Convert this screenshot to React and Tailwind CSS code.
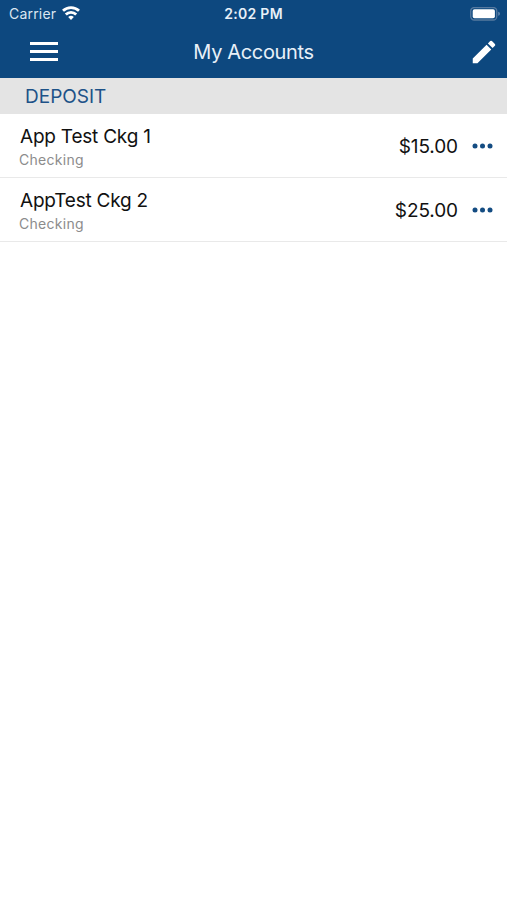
import React from "react";

const accounts = [
  { id: 1, name: "App Test Ckg 1", type: "Checking", balance: "$15.00" },
  { id: 2, name: "AppTest Ckg 2", type: "Checking", balance: "$25.00" },
];

const StatusBar = () => {
  return (
    <div className="grid h-[27px] grid-cols-3 items-center px-[9px] text-[14px] leading-none">
      <div className="flex items-center gap-[6px]">
        <span className="pt-px tracking-[0.2px] text-[#dbe6f1]">Carrier</span>
        <svg className="-mt-px" width="18" height="14" viewBox="0 0 18 14" fill="none" stroke="white" strokeWidth="2.8">
          <path d="M1 4.8a11.5 11.5 0 0 1 16 0" />
          <path d="M3.800 8.600a7.400 7.400 0 0 1 10.400 0" />
          <path d="M9 13.900L6.200 11.100a4 4 0 0 1 5.600 0z" fill="white" stroke="none" />
        </svg>
      </div>
      <span className="pt-px text-center font-semibold tracking-[0.3px] text-[#e8f0f8]">2:02 PM</span>
      <svg className="-mr-[2px] justify-self-end" width="30" height="14" viewBox="0 0 30 14">
        <rect x="0.75" y="0.5" width="26" height="12.5" rx="3.5" fill="none" stroke="#56799f" strokeWidth="1.3" />
        <rect x="2.7" y="2.2" width="22.2" height="9" rx="1.8" fill="white" />
        <path d="M28.3 4.8v4c1-.3 1.5-1.1 1.5-2s-.5-1.7-1.5-2z" fill="#6f91b5" />
      </svg>
    </div>
  );
};

const Header = () => {
  return (
    <header className="h-[78px] bg-[#0d487f] text-white">
      <StatusBar />
      <div className="grid h-[49px] grid-cols-[1fr_auto_1fr] items-center px-2">
        <button aria-label="Menu" className="ml-[22px] flex w-7 flex-col gap-[5px]">
          <span className="h-[3px] bg-white" />
          <span className="h-[3px] bg-white" />
          <span className="h-[3px] bg-white" />
        </button>
        <h1 className="pt-px text-[20px] tracking-[-0.35px] text-[#e8f0f8]">My Accounts</h1>
        <button aria-label="Edit" className="justify-self-end pt-px">
          <svg width="30" height="30" viewBox="0 0 24 24" fill="white">
            <path d="M3 17.250V21h3.750L17.810 9.940l-3.750-3.750L3 17.250zM20.710 7.040a1 1 0 0 0 0-1.410l-2.340-2.340a1 1 0 0 0-1.410 0l-1.830 1.830 3.750 3.750 1.830-1.830z" />
          </svg>
        </button>
      </div>
    </header>
  );
};

const AccountRow = ({ account }) => {
  return (
    <li className="flex h-16 items-center justify-between border-b border-[#e9e9e9] pl-5 pr-[14px] pt-px">
      <div className="pt-[2px]">
        <p className="text-[19px] leading-6 tracking-[-0.22px] text-[#111]">{account.name}</p>
        <p className="-ml-px text-[14px] leading-[21px] tracking-[0.3px] text-[#8c8c8c]">{account.type}</p>
      </div>
      <div className="flex items-center gap-[14px]">
        <span className="pt-[2px] text-[19px] tracking-[-0.1px] text-[#111]">{account.balance}</span>
        <button aria-label="More options">
          <svg width="21" height="6" viewBox="0 0 21 6" fill="#144c82">
            <circle cx="3" cy="3" r="2.5" />
            <circle cx="10.5" cy="3" r="2.5" />
            <circle cx="18" cy="3" r="2.5" />
          </svg>
        </button>
      </div>
    </li>
  );
};

const App = () => {
  return (
    <div className="min-h-screen bg-white font-['Inter','Liberation_Sans',sans-serif]">
      <Header />
      <main>
        <h2 className="flex h-9 items-center bg-[#e4e4e4] pl-[25px] pt-[2px] text-[19px] text-[#1d5288]">
          DEPOSIT
        </h2>
        <ul>
          {accounts.map((account) => (
            <AccountRow key={account.id} account={account} />
          ))}
        </ul>
      </main>
    </div>
  );
};

export default App;
